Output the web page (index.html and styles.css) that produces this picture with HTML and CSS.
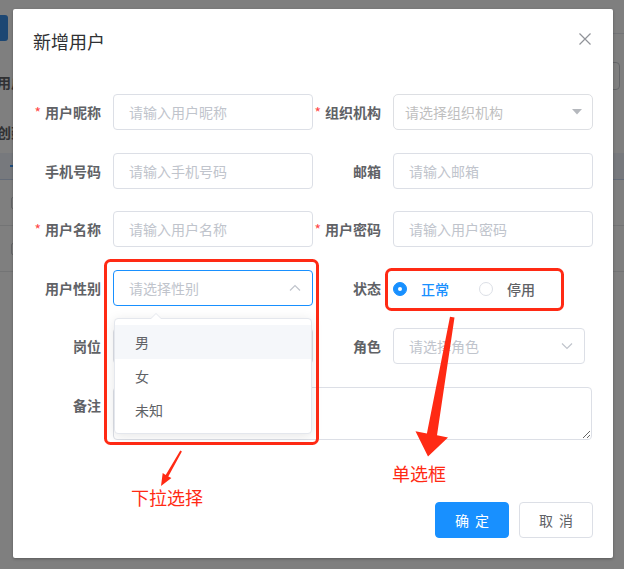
FILE: index.html
```html
<!DOCTYPE html>
<html lang="zh">
<head>
<meta charset="utf-8">
<title>新增用户</title>
<link rel="stylesheet" href="styles.css">
</head>
<body>
<div class="page">
  <div class="pg-head">
    <span class="pg-btn"></span>
    <span class="pg-tabs"></span>
  </div>
  <div class="pg-filter">
    <span class="pg-text">用户名称</span>
    <span class="pg-box"></span>
  </div>
  <div class="pg-filter2"><span class="pg-text">创建时间</span></div>
  <div class="pg-thead"><span class="pg-dash"></span></div>
  <div class="pg-tr"><span class="pg-chk"></span></div>
  <div class="pg-tr"><span class="pg-chk"></span></div>
</div>
<div class="mask"></div>

<div class="dialog">
  <div class="dlg-header">
    <span class="dlg-title">新增用户</span>
    <span class="dlg-close">
      <svg width="12" height="12" viewBox="0 0 12 12"><path d="M0.5 0.5 L11.5 11.5 M11.5 0.5 L0.5 11.5" stroke="#909399" stroke-width="1.2" fill="none"/></svg>
    </span>
  </div>
  <div class="dlg-body">
    <form class="form">
      <div class="item">
        <label class="lbl req">用户昵称</label>
        <div class="ctl"><input class="inp" placeholder="请输入用户昵称"></div>
      </div>
      <div class="item">
        <label class="lbl req">组织机构</label>
        <div class="ctl">
          <div class="tree">
            <span class="ph tree-ph">请选择组织机构</span>
            <svg class="caret" width="10" height="6" viewBox="0 0 10 6"><path d="M0 0 H10 L5 5.5 Z" fill="#b5b8bd"/></svg>
          </div>
        </div>
      </div>
      <div class="item">
        <label class="lbl">手机号码</label>
        <div class="ctl"><input class="inp" placeholder="请输入手机号码"></div>
      </div>
      <div class="item">
        <label class="lbl">邮箱</label>
        <div class="ctl"><input class="inp" placeholder="请输入邮箱"></div>
      </div>
      <div class="item">
        <label class="lbl req">用户名称</label>
        <div class="ctl"><input class="inp" placeholder="请输入用户名称"></div>
      </div>
      <div class="item">
        <label class="lbl req">用户密码</label>
        <div class="ctl"><input class="inp" placeholder="请输入用户密码"></div>
      </div>
      <div class="item">
        <label class="lbl">用户性别</label>
        <div class="ctl">
          <div class="sel focus">
            <span class="ph">请选择性别</span>
            <svg class="chev" width="12" height="8" viewBox="0 0 12 8"><path d="M1 6.5 L6 1.5 L11 6.5" stroke="#c0c4cc" stroke-width="1.2" fill="none"/></svg>
          </div>
          <div class="dropdown">
            <div class="opt hover">男</div>
            <div class="opt">女</div>
            <div class="opt">未知</div>
          </div>
        </div>
      </div>
      <div class="item">
        <label class="lbl">状态</label>
        <div class="ctl radios">
          <span class="radio checked"><span class="dot"></span>正常</span>
          <span class="radio"><span class="dot"></span>停用</span>
        </div>
      </div>
      <div class="item">
        <label class="lbl">岗位</label>
        <div class="ctl">
          <div class="sel">
            <span class="ph"></span>
            <svg class="chev" width="12" height="8" viewBox="0 0 12 8"><path d="M1 1.5 L6 6.5 L11 1.5" stroke="#c0c4cc" stroke-width="1.2" fill="none"/></svg>
          </div>
        </div>
      </div>
      <div class="item">
        <label class="lbl">角色</label>
        <div class="ctl">
          <div class="sel role">
            <span class="ph">请选择角色</span>
            <svg class="chev" width="12" height="8" viewBox="0 0 12 8"><path d="M1 1.5 L6 6.5 L11 1.5" stroke="#c0c4cc" stroke-width="1.2" fill="none"/></svg>
          </div>
        </div>
      </div>
      <div class="item full">
        <label class="lbl">备注</label>
        <div class="ctl"><textarea class="ta"></textarea></div>
      </div>
    </form>
  </div>
  <div class="dlg-footer">
    <button class="btn primary" type="button">确 定</button>
    <button class="btn" type="button">取 消</button>
  </div>
</div>

<svg class="annot" width="624" height="569" viewBox="0 0 624 569">
  <rect x="105.5" y="260.5" width="212" height="183" rx="5" fill="none" stroke="#ff2a14" stroke-width="3"/>
  <rect x="386.5" y="269.5" width="176" height="40" rx="5" fill="none" stroke="#ff2a14" stroke-width="3"/>
  <polygon points="180.3,450.6 181.9,451.5 168.3,476.4 171.4,478.1 161,486 162.7,473.1 165.7,474.9" fill="#ff2a14"/>
  <polygon points="450,316.7 454.5,317.4 437,435.2 448,437.5 428,456.5 415.5,431.3 426.9,433.5" fill="#ff2a14"/>
</svg>
<div class="note note-a">下拉选择</div>
<div class="note note-b">单选框</div>
</body>
</html>
```

FILE: styles.css
```css
* { box-sizing: border-box; }

body {
  margin: 0;
  width: 624px;
  height: 569px;
  overflow: hidden;
  position: relative;
  background: #fff;
  font-family: "Noto Sans CJK SC", "Noto Sans", sans-serif;
}

/* underlying page */
.page {
  height: 569px;
  overflow: hidden;
  color: #606266;
  font-size: 14px;
}
.pg-head {
  display: flex;
  justify-content: space-between;
  height: 62px;
}
.pg-btn {
  margin-top: 15px;
  margin-left: -50px;
  width: 58px;
  height: 26px;
  background: #3a8ee6;
  border-radius: 3px;
}
.pg-tabs {
  width: 80px;
  height: 34px;
  border-bottom: 1px solid #e4e7ed;
}
.pg-filter {
  display: flex;
  justify-content: space-between;
  height: 56px;
}
.pg-text {
  margin-left: -3px;
  margin-top: 12px;
  line-height: 16px;
  font-weight: 700;
}
.pg-box {
  width: 70px;
  height: 28px;
  margin-right: 4px;
  border: 1px solid #c8cbd1;
  border-radius: 4px;
}
.pg-filter2 {
  height: 35px;
  display: flex;
}
.pg-filter2 .pg-text { margin-top: 6px; }
.pg-thead {
  height: 27px;
  background: #eef3fb;
  border-bottom: 1px solid #c8d7ee;
  display: flex;
  align-items: center;
}
.pg-dash {
  margin-left: 10px;
  width: 6px;
  height: 2px;
  background: #409eff;
}
.pg-tr {
  height: 46px;
  border-bottom: 1px solid #e6e8eb;
  display: flex;
  align-items: center;
}
.pg-chk {
  margin-left: 11px;
  width: 12px;
  height: 12px;
  border: 1px solid #c8cbd1;
  border-radius: 2px;
}

.mask {
  position: absolute;
  inset: 0;
  background: rgba(0, 0, 0, 0.5);
}

/* dialog */
.dialog {
  position: absolute;
  left: 13px;
  top: 9px;
  width: 600px;
  background: #fff;
  border-radius: 2px;
  box-shadow: 0 1px 3px rgba(0, 0, 0, 0.3);
}
.dlg-header {
  position: relative;
  padding: 20px 20px 10px;
}
.dlg-title {
  display: block;
  font-size: 18px;
  line-height: 24px;
  color: #303133;
}
.dlg-close {
  position: absolute;
  top: 24px;
  right: 22px;
  width: 12px;
  height: 12px;
  display: flex;
}
.dlg-body {
  padding: 31px 20px 30px;
}
.form {
  display: grid;
  grid-template-columns: 280px 280px;
  row-gap: 22.6px;
  margin: 0;
  padding-bottom: 22px;
}
.item {
  display: flex;
  align-items: flex-start;
}
.item.full { grid-column: 1 / -1; }
.lbl {
  flex: none;
  width: 80px;
  padding-right: 12px;
  text-align: right;
  font-size: 14px;
  line-height: 36px;
  color: #606266;
  font-weight: 700;
}
.lbl.req::before {
  content: "*";
  color: #ff4949;
  margin-right: 4px;
  font-weight: 400;
}
.ctl {
  flex: 1;
  min-width: 0;
  position: relative;
}
.inp {
  display: block;
  width: 100%;
  height: 36px;
  padding: 0 15px;
  border: 1px solid #dcdfe6;
  border-radius: 4px;
  font-family: "Noto Sans CJK SC", "Noto Sans", sans-serif;
  font-size: 14px;
  color: #606266;
  outline: none;
  background: #fff;
}
.inp::placeholder, .ta::placeholder { color: #c0c4cc; }
.ph {
  color: #c0c4cc;
  font-size: 14px;
}

.tree {
  height: 36px;
  border: 1px solid #dddfe3;
  border-radius: 5px;
  display: flex;
  align-items: center;
  justify-content: space-between;
  padding: 0 10px 0 11px;
}
.tree-ph { color: #bfbfbf; }
.caret { display: block; }

.sel {
  position: relative;
  height: 36px;
  border: 1px solid #dcdfe6;
  border-radius: 4px;
  display: flex;
  align-items: center;
  justify-content: space-between;
  padding: 0 11px 0 15px;
  background: #fff;
}
.sel.focus { border-color: #1890ff; }
.sel.role { width: 192px; }
.chev { display: block; }

.dropdown {
  position: absolute;
  z-index: 10;
  top: 48px;
  left: 1px;
  width: 198px;
  padding: 6px 0;
  background: #fff;
  border: 1px solid #e4e7ed;
  border-radius: 4px;
  box-shadow: 0 2px 12px 0 rgba(0, 0, 0, 0.1);
}
.dropdown::before,
.dropdown::after {
  content: "";
  position: absolute;
  left: 35px;
  border: 6px solid transparent;
  border-top-width: 0;
}
.dropdown::before {
  top: -6px;
  border-bottom-color: #e4e7ed;
}
.dropdown::after {
  top: -5px;
  border-bottom-color: #fff;
}
.opt {
  height: 34px;
  line-height: 34px;
  padding: 0 20px;
  font-size: 14px;
  color: #606266;
}
.opt.hover { background: #f5f7fa; }

.radios {
  display: flex;
  align-items: center;
  height: 36px;
  padding-top: 2px;
}
.radio {
  display: inline-flex;
  align-items: center;
  margin-right: 30px;
  font-size: 14px;
  font-weight: 500;
  color: #606266;
}
.dot {
  position: relative;
  width: 14px;
  height: 14px;
  margin-right: 14px;
  border: 1px solid #dcdfe6;
  border-radius: 50%;
  background: #fff;
}
.radio.checked { color: #1890ff; }
.radio.checked .dot {
  background: #1890ff;
  border-color: #1890ff;
}
.radio.checked .dot::after {
  content: "";
  position: absolute;
  left: 4px;
  top: 4px;
  width: 4px;
  height: 4px;
  border-radius: 50%;
  background: #fff;
}

.ta {
  display: block;
  width: 479px;
  height: 53px;
  padding: 5px 15px;
  border: 1px solid #dcdfe6;
  border-radius: 4px;
  font-family: "Noto Sans CJK SC", "Noto Sans", sans-serif;
  font-size: 14px;
  line-height: 1.5;
  color: #606266;
  resize: vertical;
  outline: none;
}

.dlg-footer {
  display: flex;
  justify-content: flex-end;
  gap: 10px;
  padding: 10px 20px 20px;
}
.btn {
  height: 36px;
  width: 74px;
  padding: 0;
  border: 1px solid #dcdfe6;
  border-radius: 4px;
  background: #fff;
  color: #606266;
  font-family: "Noto Sans CJK SC", "Noto Sans", sans-serif;
  font-size: 14px;
  word-spacing: 3px;
}
.btn.primary {
  background: #1890ff;
  border-color: #1890ff;
  color: #fff;
}

/* annotations */
.annot {
  position: absolute;
  left: 0;
  top: 0;
  pointer-events: none;
}
.note {
  position: absolute;
  font-size: 18px;
  line-height: 22px;
  color: #ff2a14;
}
.note-a { left: 131px; top: 486px; }
.note-b { left: 392px; top: 462px; }
```
